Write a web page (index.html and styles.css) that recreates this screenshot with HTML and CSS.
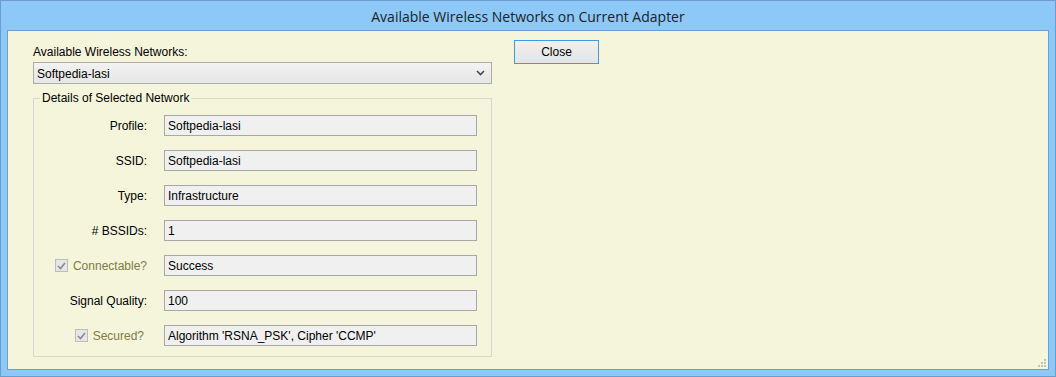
FILE: index.html
```html
<!DOCTYPE html>
<html>
<head>
<meta charset="utf-8">
<link rel="stylesheet" href="styles.css">
</head>
<body>
<div class="window">
  <div class="titlebar">Available Wireless Networks on Current Adapter</div>
  <div class="client">
    <div class="left">
      <div class="top-label">Available Wireless Networks:</div>
      <div class="combo">
        <span class="combo-text">Softpedia-lasi</span>
        <svg class="chev" width="9" height="6" viewBox="0 0 9 6"><path d="M1 1 L4.5 4.5 L8 1" fill="none" stroke="#4a4a4a" stroke-width="1.6"/></svg>
      </div>
      <fieldset class="group">
        <legend>Details of Selected Network</legend>
        <div class="row"><div class="lbl">Profile:</div><div class="field">Softpedia-lasi</div></div>
        <div class="row"><div class="lbl">SSID:</div><div class="field">Softpedia-lasi</div></div>
        <div class="row"><div class="lbl">Type:</div><div class="field">Infrastructure</div></div>
        <div class="row"><div class="lbl"># BSSIDs:</div><div class="field">1</div></div>
        <div class="row"><div class="lbl chk-lbl"><span class="chk"><svg width="9" height="8" viewBox="0 0 9 8"><path d="M1 4 L3.5 6.5 L8 1" fill="none" stroke="#8a8a8a" stroke-width="1.6"/></svg></span><span class="dis">Connectable?</span></div><div class="field">Success</div></div>
        <div class="row"><div class="lbl">Signal Quality:</div><div class="field">100</div></div>
        <div class="row"><div class="lbl chk-lbl sec"><span class="chk"><svg width="9" height="8" viewBox="0 0 9 8"><path d="M1 4 L3.5 6.5 L8 1" fill="none" stroke="#8a8a8a" stroke-width="1.6"/></svg></span><span class="dis">Secured?</span></div><div class="field">Algorithm 'RSNA_PSK', Cipher 'CCMP'</div></div>
      </fieldset>
    </div>
    <div class="right">
      <button class="btn">Close</button>
    </div>
    <svg class="grip" width="8" height="8" viewBox="0 0 8 8">
      <rect x="6" y="0" width="2" height="2" fill="#c2c2b8"/>
      <rect x="3" y="3" width="2" height="2" fill="#c2c2b8"/>
      <rect x="6" y="3" width="2" height="2" fill="#c2c2b8"/>
      <rect x="0" y="6" width="2" height="2" fill="#c2c2b8"/>
      <rect x="3" y="6" width="2" height="2" fill="#c2c2b8"/>
      <rect x="6" y="6" width="2" height="2" fill="#c2c2b8"/>
    </svg>
  </div>
</div>
</body>
</html>
```

FILE: styles.css
```css
* { box-sizing: border-box; }
html, body { margin: 0; padding: 0; }
body { width: 1056px; height: 377px; overflow: hidden; font-family: "Liberation Sans", Arial, sans-serif; font-size: 12px; color: #000; }
.window {
  width: 1056px; height: 377px;
  background: #8cc8f8;
  border: 1px solid #6d9ccc;
  display: flex; flex-direction: column;
}
.titlebar {
  height: 29px; flex: none;
  display: flex; align-items: center; justify-content: center;
  font-family: "Open Sans", "Noto Sans", sans-serif; font-size: 14px;
  color: #222; padding-top: 1px;
}
.client {
  position: relative;
  margin: 0 6px 6px 6px;
  height: 340px;
  background: #f5f5dc;
  border: 1px solid #6f9fd0;
  display: flex;
  padding: 14px 0 0 25px;
}
.left { width: 459px; display: flex; flex-direction: column; }
.top-label { line-height: 14px; height: 14px; margin-bottom: 3px; }
.combo {
  height: 22px;
  border: 1px solid #acacac;
  background: linear-gradient(#f2f2f2, #e6e6e6);
  display: flex; align-items: center; justify-content: space-between;
  padding: 1px 6px 0 3px;
}
.chev { margin-top: -1px; }
.group {
  margin: 7px 0 0 0;
  padding: 10px 0 9px 0;
  border: 1px solid #d8d8d0;
  display: flex; flex-direction: column; gap: 14px;
  height: 266px;
}
.group legend {
  margin-left: 6px; padding: 0 2px; line-height: 14px;
}
.row { display: flex; align-items: center; height: 21px; }
.lbl { width: 113px; text-align: right; margin-right: 17px; line-height: 14px; }
.chk-lbl { display: flex; align-items: center; justify-content: flex-end; }
.chk-lbl.sec { padding-right: 3px; }
.chk {
  width: 13px; height: 13px; border: 1px solid #bcbcbc; background: #e6e6e6;
  display: inline-flex; align-items: center; justify-content: center; margin-right: 5px;
}
.dis { color: #7d7b45; }
.field {
  width: 313px; height: 21px;
  border: 1px solid #a8a8a8;
  background: #f0f0f0;
  padding: 3px 0 0 3px; line-height: 14px;
}
.right { margin-left: 22px; }
.btn {
  margin-top: -6px;
  width: 85px; height: 24px;
  border: 1px solid #3c9be6;
  background: linear-gradient(#f0f0f0, #e4e4e4);
  font-family: "Liberation Sans", Arial, sans-serif; font-size: 12px; color: #000;
  padding: 0;
}
.grip { position: absolute; right: 2px; bottom: 2px; }
```
